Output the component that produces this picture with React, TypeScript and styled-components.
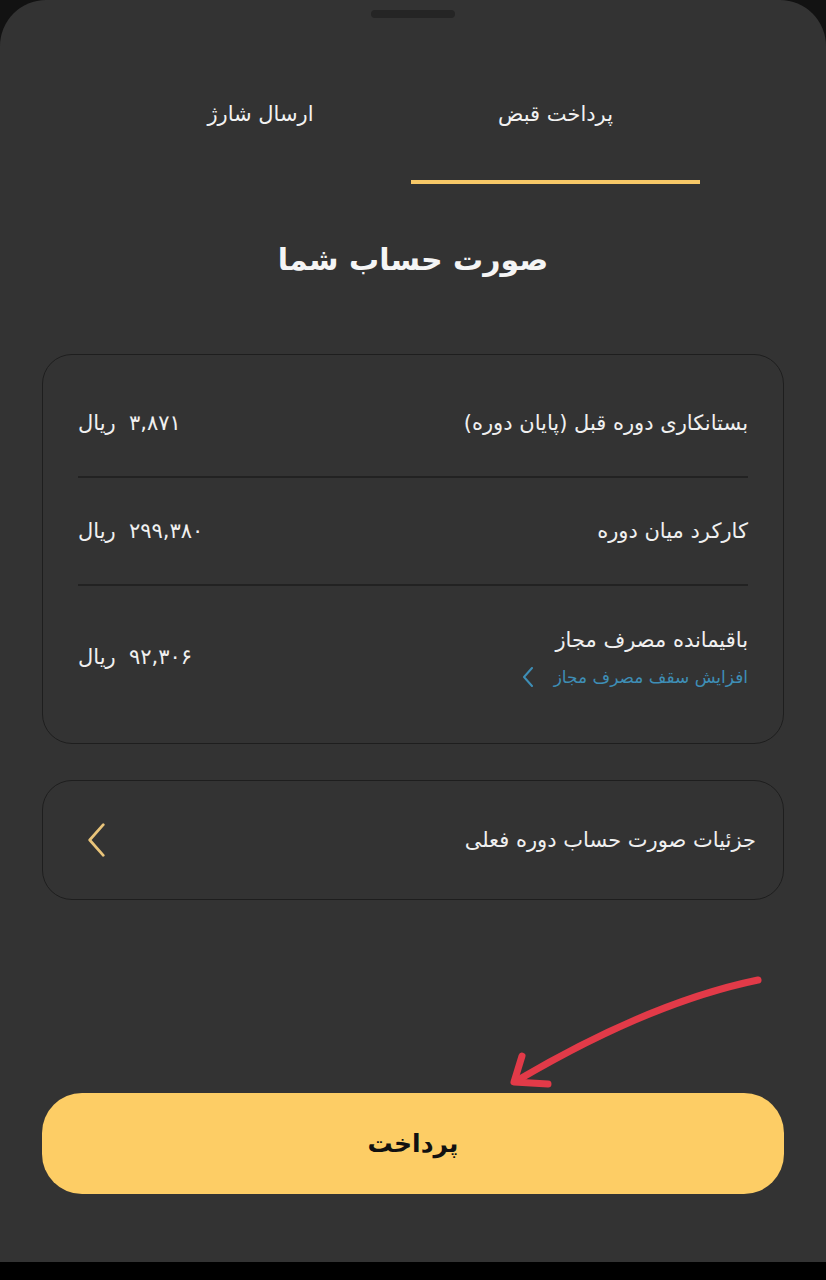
import * as React from 'react'
import styled, { createGlobalStyle } from 'styled-components'

const GlobalStyle = createGlobalStyle`
  html, body {
    margin: 0;
    padding: 0;
    background: #121212;
  }
  body {
    font-family: 'DejaVu Sans', 'Noto Sans', sans-serif;
  }
`

const Screen = styled.div`
  width: 826px;
  height: 1280px;
  display: flex;
  flex-direction: column;
  background: #121212;
  overflow: hidden;
`

const Sheet = styled.div`
  position: relative;
  flex: 1;
  background: #333333;
  border-radius: 46px 46px 0 0;
  display: flex;
  flex-direction: column;
  direction: rtl;
  padding: 0 42px;
`

const NavBar = styled.div`
  height: 18px;
  background: #000;
`

const Handle = styled.div`
  align-self: center;
  width: 84px;
  height: 8px;
  margin-top: 10px;
  border-radius: 4px;
  background: #252525;
`

const Tabs = styled.div`
  display: flex;
  justify-content: flex-start;
  gap: 6px;
  margin-top: 74px;
  padding-right: 84px;
`

const Tab = styled.div<{ $active?: boolean }>`
  width: 289px;
  height: 92px;
  box-sizing: border-box;
  display: flex;
  justify-content: center;
  padding-top: 9px;
  font-size: 21px;
  line-height: 26px;
  color: #f2f2f2;
  border-bottom: 4px solid ${p => (p.$active ? '#f7c867' : 'transparent')};
`

const Title = styled.h1`
  margin: 58px 0 0;
  text-align: center;
  font-size: 30px;
  line-height: 36px;
  font-weight: 700;
  color: #f5f5f5;
`

const Card = styled.div`
  border: 1.5px solid #1e1e1e;
  border-radius: 30px;
  padding: 0 35px;
`

const SummaryCard = styled(Card)`
  margin-top: 76px;
  padding-top: 15px;
  padding-bottom: 15px;
`

const Row = styled.div<{ $last?: boolean }>`
  display: flex;
  justify-content: space-between;
  align-items: center;
  height: ${p => (p.$last ? '142px' : '108px')};
  box-sizing: border-box;
  border-bottom: ${p => (p.$last ? 'none' : '2px solid #222222')};
`

const Label = styled.div`
  font-size: 21px;
  line-height: 26px;
  color: #f0f0f0;
`

const LabelGroup = styled.div`
  display: flex;
  flex-direction: column;
  gap: 13px;
`

const Amount = styled.div`
  font-size: 21px;
  line-height: 26px;
  color: #f0f0f0;
  white-space: pre;
`

const Link = styled.div`
  display: flex;
  align-items: center;
  gap: 21px;
  font-size: 17px;
  line-height: 22px;
  color: #3e8eb6;
`

const DetailCard = styled(Card)`
  margin-top: 36px;
  height: 120px;
  box-sizing: border-box;
  display: flex;
  align-items: center;
  justify-content: space-between;
  padding: 0 27px 0 45px;
`

const Spacer = styled.div`
  flex: 1;
`

const PayButton = styled.button`
  height: 101px;
  border: none;
  border-radius: 40px;
  background: #fdcd65;
  color: #111;
  font-family: 'DejaVu Sans', sans-serif;
  font-size: 25px;
  font-weight: 700;
  margin-bottom: 68px;
  cursor: pointer;
`

const Arrow = styled.svg`
  position: absolute;
  left: 500px;
  top: 970px;
`

const Chevron = ({ color, size, stroke }: { color: string; size: number; stroke: number }) => (
  <svg width={size / 2} height={size} viewBox="0 0 10 20" fill="none">
    <path d="M9 1 L1 10 L9 19" stroke={color} strokeWidth={stroke} strokeLinecap="round" strokeLinejoin="round" />
  </svg>
)

const rows = [
  { label: 'بستانکاری دوره قبل (پایان دوره)', amount: '۳,۸۷۱' },
  { label: 'کارکرد میان دوره', amount: '۲۹۹,۳۸۰' }
]

export default function App() {
  return (
    <Screen>
      <GlobalStyle />
      <Sheet>
        <Handle />
        <Tabs>
          <Tab $active>پرداخت قبض</Tab>
          <Tab>ارسال شارژ</Tab>
        </Tabs>
        <Title>صورت حساب شما</Title>

        <SummaryCard>
          {rows.map(r => (
            <Row key={r.label}>
              <Label>{r.label}</Label>
              <Amount>{r.amount}  ریال</Amount>
            </Row>
          ))}
          <Row $last>
            <LabelGroup>
              <Label>باقیمانده مصرف مجاز</Label>
              <Link>
                افزایش سقف مصرف مجاز
                <Chevron color="#3e8eb6" size={20} stroke={2} />
              </Link>
            </LabelGroup>
            <Amount>۹۲,۳۰۶  ریال</Amount>
          </Row>
        </SummaryCard>

        <DetailCard>
          <Label>جزئیات صورت حساب دوره فعلی</Label>
          <Chevron color="#e9c47a" size={34} stroke={1.6} />
        </DetailCard>

        <Spacer />
        <PayButton>پرداخت</PayButton>

        <Arrow width="270" height="125" viewBox="0 0 270 125" fill="none">
          <path
            d="M258 10 C 200 22, 120 50, 18 110"
            stroke="#e23a48"
            strokeWidth="7"
            strokeLinecap="round"
          />
          <path
            d="M22 86 L14 112 L48 114"
            stroke="#e23a48"
            strokeWidth="7"
            strokeLinecap="round"
            strokeLinejoin="round"
          />
        </Arrow>
      </Sheet>
      <NavBar />
    </Screen>
  )
}
